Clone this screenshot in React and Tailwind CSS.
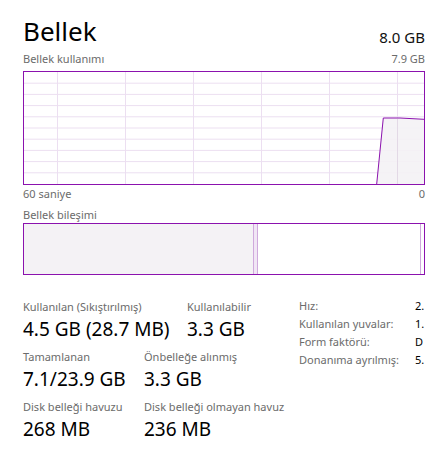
import React from "react";

const font = { fontFamily: '"Noto Sans", "Open Sans", sans-serif' };

function UsageChart() {
  const vLines = [33.5, 101.5, 169.5, 237.5, 305.5, 373.5];
  const hLines = [1, 2, 3, 4, 5, 6, 7, 8, 9].map((i) => i * 11.2);
  return (
    <svg width="400" height="112" viewBox="0 0 400 112" className="block">
      {vLines.map((x) => (
        <line key={x} x1={x} y1="0" x2={x} y2="112" stroke="#ecdff1" strokeWidth="1" />
      ))}
      {hLines.map((y) => (
        <line key={y} x1="0" y1={y} x2="400" y2={y} stroke="#ecdff1" strokeWidth="1" />
      ))}
      <polygon points="352.7,112 359.3,46 376,46 400,47.3 400,112" fill="#f4f2f5" fillOpacity="0.9" />
      {vLines.filter((x) => x > 352).map((x) => (
        <line key={"o" + x} x1={x} y1="47" x2={x} y2="112" stroke="#e3d9e6" strokeWidth="1" />
      ))}
      <polyline points="352.7,112 359.3,46 376,46 400,47.3" fill="none" stroke="#8b12ae" strokeWidth="1" />
    </svg>
  );
}

function Stat({ label, value, className }) {
  return (
    <div className={className}>
      <div className="text-[11px] leading-[15px] text-[#6b6b6b]">{label}</div>
      <div className="text-[19px] leading-[24px] text-black mt-[3px]">{value}</div>
    </div>
  );
}

export default function App() {
  return (
    <div className="w-[445px] h-[476px] bg-white pl-[23px] pr-[20px] pt-[14px] overflow-hidden" style={font}>
      {/* Header */}
      <div className="flex justify-between items-end">
        <div className="text-[26px] leading-[35px] text-black">Bellek</div>
        <div className="text-[15px] leading-[20px] text-[#111] mb-[2px]">8.0 GB</div>
      </div>

      <div className="flex justify-between text-[11px] leading-[15px] text-[#6b6b6b] mt-[2px]">
        <span>Bellek kullanımı</span>
        <span>7.9 GB</span>
      </div>

      {/* Usage graph */}
      <div className="border border-[#8b12ae] h-[114px] w-[402px] mt-[5px]">
        <UsageChart />
      </div>

      <div className="flex justify-between text-[11px] leading-[15px] text-[#6b6b6b] mt-[1px]">
        <span>60 saniye</span>
        <span>0</span>
      </div>

      <div className="text-[11px] leading-[15px] text-[#6b6b6b] mt-[6px]">Bellek bileşimi</div>

      {/* Composition bar */}
      <div className="border border-[#8b12ae] h-[52px] w-[402px] mt-[1px] flex">
        <div className="w-[229px] bg-[#f4f2f5]"></div>
        <div className="w-[5px] bg-[#f1e6f5] border-x border-[#cfa9dc]"></div>
        <div className="flex-1 bg-white"></div>
        <div className="w-[1px] bg-[#cfa9dc] mr-[3px]"></div>
      </div>

      {/* Stats */}
      <div className="flex mt-[24px]">
        <div className="w-[276px]">
          <div className="flex">
            <Stat className="w-[164px]" label="Kullanılan (Sıkıştırılmış)" value="4.5 GB (28.7 MB)" />
            <Stat label="Kullanılabilir" value="3.3 GB" />
          </div>
          <div className="flex mt-[8px]">
            <Stat className="w-[121px]" label="Tamamlanan" value="7.1/23.9 GB" />
            <Stat label="Önbelleğe alınmış" value="3.3 GB" />
          </div>
          <div className="flex mt-[8px]">
            <Stat className="w-[121px]" label="Disk belleği havuzu" value="268 MB" />
            <Stat label="Disk belleği olmayan havuz" value="236 MB" />
          </div>
        </div>
        <div className="text-[11px] leading-[18px] text-[#6b6b6b] -mt-[2px]">
          <div className="flex"><span className="w-[116px]">Hız:</span><span className="text-black">2.</span></div>
          <div className="flex"><span className="w-[116px]">Kullanılan yuvalar:</span><span className="text-black">1.</span></div>
          <div className="flex"><span className="w-[116px]">Form faktörü:</span><span className="text-black">D</span></div>
          <div className="flex"><span className="w-[116px]">Donanıma ayrılmış:</span><span className="text-black">5.</span></div>
        </div>
      </div>
    </div>
  );
}
